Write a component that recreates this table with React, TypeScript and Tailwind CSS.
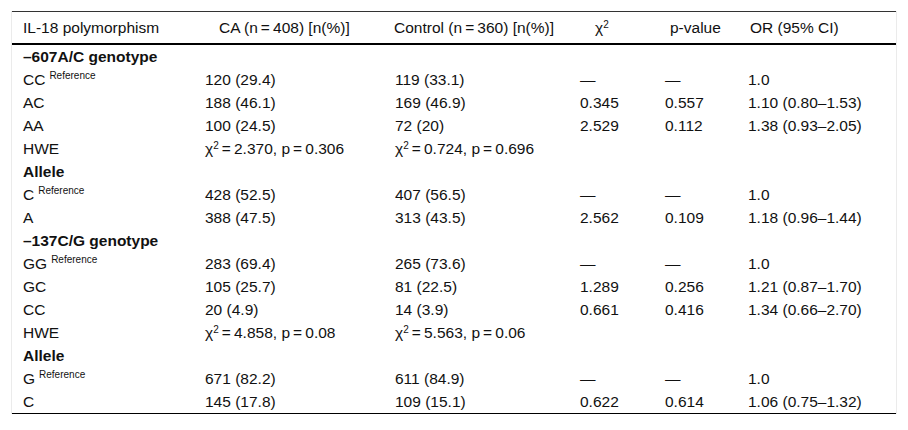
type Row =
  | { kind: "section"; label: string }
  | { kind: "data"; label: string; sup?: boolean; cells: React.ReactNode[] };

function Chi({ v, p }: { v: string; p: string }) {
  return (
    <span>
      χ<sup className="text-[10px]">2</sup>
      {"\u2009=\u2009"}
      {v}, p{"\u2009=\u2009"}
      {p}
    </span>
  );
}

const rows: Row[] = [
  { kind: "section", label: "–607A/C genotype" },
  { kind: "data", label: "CC", sup: true, cells: ["120 (29.4)", "119 (33.1)", "—", "—", "1.0"] },
  { kind: "data", label: "AC", cells: ["188 (46.1)", "169 (46.9)", "0.345", "0.557", "1.10 (0.80–1.53)"] },
  { kind: "data", label: "AA", cells: ["100 (24.5)", "72 (20)", "2.529", "0.112", "1.38 (0.93–2.05)"] },
  {
    kind: "data",
    label: "HWE",
    cells: [<Chi v="2.370" p="0.306" />, <Chi v="0.724" p="0.696" />, "", "", ""],
  },
  { kind: "section", label: "Allele" },
  { kind: "data", label: "C", sup: true, cells: ["428 (52.5)", "407 (56.5)", "—", "—", "1.0"] },
  { kind: "data", label: "A", cells: ["388 (47.5)", "313 (43.5)", "2.562", "0.109", "1.18 (0.96–1.44)"] },
  { kind: "section", label: "–137C/G genotype" },
  { kind: "data", label: "GG", sup: true, cells: ["283 (69.4)", "265 (73.6)", "—", "—", "1.0"] },
  { kind: "data", label: "GC", cells: ["105 (25.7)", "81 (22.5)", "1.289", "0.256", "1.21 (0.87–1.70)"] },
  { kind: "data", label: "CC", cells: ["20 (4.9)", "14 (3.9)", "0.661", "0.416", "1.34 (0.66–2.70)"] },
  {
    kind: "data",
    label: "HWE",
    cells: [<Chi v="4.858" p="0.08" />, <Chi v="5.563" p="0.06" />, "", "", ""],
  },
  { kind: "section", label: "Allele" },
  { kind: "data", label: "G", sup: true, cells: ["671 (82.2)", "611 (84.9)", "—", "—", "1.0"] },
  { kind: "data", label: "C", cells: ["145 (17.8)", "109 (15.1)", "0.622", "0.614", "1.06 (0.75–1.32)"] },
];

const grid = "grid grid-cols-[183px_190px_185px_85px_83px_160px]";

export default function App() {
  return (
    <div className="w-[908px] h-[430px] bg-white pt-[11px] px-[11px] font-['Liberation_Sans',Arial,sans-serif] text-[15.5px] text-[#111]">
      <div className="w-[886px] border-x border-[#ebebeb]">
        <div className={`${grid} h-[34px] items-center border-t border-[#333] border-b-2 border-b-black`}>
          <div className="pl-[11px]">IL-18 polymorphism</div>
          <div className="pl-[24px]">CA (n{"\u2009=\u2009"}408) [n(%)]</div>
          <div className="pl-[9px] whitespace-nowrap">Control (n{"\u2009=\u2009"}360) [n(%)]</div>
          <div className="pl-[25px]">
            χ<sup className="text-[10px]">2</sup>
          </div>
          <div className="pl-[15px]">p-value</div>
          <div className="pl-[12px]">OR (95% CI)</div>
        </div>
        <div className="border-b border-black">
          {rows.map((r, i) =>
            r.kind === "section" ? (
              <div key={i} className="h-[23px] flex items-center pl-[11px] font-bold">
                {r.label}
              </div>
            ) : (
              <div key={i} className={`${grid} h-[23px] items-center`}>
                <div className="pl-[11px]">
                  {r.label}
                  {r.sup && <sup className="text-[10px] ml-[4px] -top-[6px]">Reference</sup>}
                </div>
                {r.cells.map((c, j) => (
                  <div key={j} className="pl-[10px] whitespace-nowrap">
                    {c}
                  </div>
                ))}
              </div>
            )
          )}
        </div>
      </div>
    </div>
  );
}
